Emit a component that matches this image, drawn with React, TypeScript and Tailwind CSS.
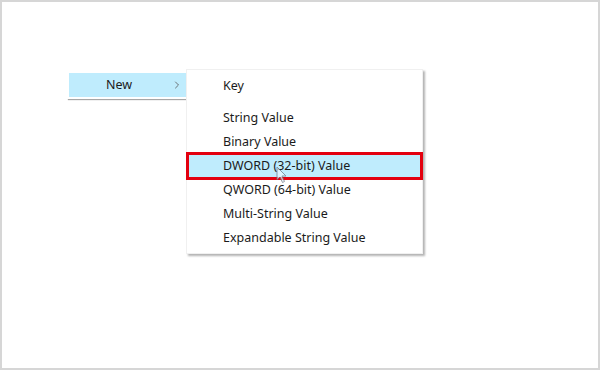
import { ChevronRight } from 'lucide-react';

const items = [
  'String Value',
  'Binary Value',
  'DWORD (32-bit) Value',
  'QWORD (64-bit) Value',
  'Multi-String Value',
  'Expandable String Value',
];

const Cursor = () => (
  <svg
    className="absolute left-[89px] top-[12px] opacity-70"
    width="12"
    height="18"
    viewBox="0 0 12 18"
  >
    <path
      d="M1 1 L1 14 L4 11 L6.5 16.5 L8.5 15.5 L6 10 L10 10 Z"
      fill="#e8f7ff"
      stroke="#6b7280"
      strokeWidth="1"
      strokeLinejoin="round"
    />
  </svg>
);

export default function App() {
  return (
    <div
      className="w-[600px] h-[370px] bg-white border-2 border-[#d6d6d6] text-[#1b1b1b] text-[12.5px]"
      style={{ fontFamily: '"Noto Sans", "Open Sans", sans-serif' }}
    >
      <div className="flex items-start pt-[67px] pl-[65px]">
        <div className="w-[121px] mt-[2px] bg-white p-[2px] shadow-[0_2px_1px_-1px_rgba(0,0,0,0.35)]">
          <div className="flex items-center h-[24px] bg-[#bfecfd] pl-[37px] pr-[3px]">
            <span className="flex-1">New</span>
            <ChevronRight className="w-[12px] h-[12px] text-[#555]" strokeWidth={1.6} />
          </div>
        </div>

        <div className="w-[237px] -ml-[2px] bg-white border border-[#f0f0f0] pt-[4px] pb-[3px] shadow-[2px_2px_2px_rgba(0,0,0,0.3)]">
          <div className="h-[24px] flex items-center pl-[36px]">Key</div>
          <div className="h-[8px]" />
          {items.map((label) => {
            const active = label.startsWith('DWORD');
            return (
              <div
                key={label}
                className={`relative h-[24px] flex items-center pl-[36px] ${active ? 'bg-[#bfecfd]' : ''}`}
              >
                {label}
                {active && (
                  <>
                    <span className="absolute inset-x-[-1px] -top-[2px] -bottom-[2px] border-[3px] border-[#e3000f]" />
                    <Cursor />
                  </>
                )}
              </div>
            );
          })}
        </div>
      </div>
    </div>
  );
}
